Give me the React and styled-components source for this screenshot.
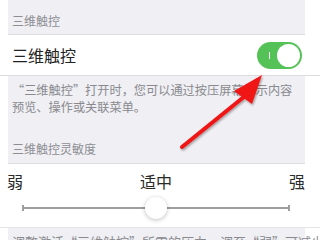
import React from 'react';
import styled, { createGlobalStyle } from 'styled-components';

const GlobalStyle = createGlobalStyle`
  html, body {
    margin: 0;
    padding: 0;
    background: #ffffff;
    overflow: hidden;
  }
  body {
    font-family: "Noto Sans CJK SC", "Noto Sans", sans-serif;
  }
`;

const Page = styled.div`
  position: relative;
  width: 320px;
  height: 240px;
  overflow: hidden;
  display: flex;
  flex-direction: column;
  & > * { flex-shrink: 0; }
`;

const GrayBlock = styled.div`
  margin: 0 15px 0 8px;
  background: #efeff4;
  height: ${(p) => p.$h}px;
  box-sizing: border-box;
  padding: ${(p) => p.$pad || '0 4px'};
  display: flex;
  flex-direction: column;
  justify-content: ${(p) => p.$justify || 'flex-start'};
  border-bottom: ${(p) => (p.$line ? '1px solid #dcdce0' : 'none')};
`;

const SectionTitle = styled.div`
  font-size: 12px;
  line-height: 16px;
  color: #8e8e93;
  padding-bottom: ${(p) => p.$pb || 0}px;
`;

const Note = styled.div`
  font-size: ${(p) => p.$size || 12.2}px;
  line-height: 17px;
  color: #8a8a8e;
  white-space: nowrap;
`;

const Row = styled.div`
  height: 40px;
  display: flex;
  align-items: center;
  justify-content: space-between;
  padding: 0 18px 0 12px;
  background: #fff;
  border-bottom: 1px solid #dcdce0;
`;

const RowLabel = styled.span`
  font-size: 16px;
  color: #222;
`;

const Toggle = styled.div`
  position: relative;
  width: 45px;
  height: 27px;
  border-radius: 14px;
  background: #55c257;
  display: flex;
  align-items: center;
  justify-content: flex-end;
  padding: 2px;
  box-sizing: border-box;
`;

const ToggleMark = styled.span`
  position: absolute;
  left: 12px;
  top: 10px;
  width: 1px;
  height: 7px;
  background: #fff;
`;

const Knob = styled.span`
  width: 23px;
  height: 23px;
  border-radius: 50%;
  background: #fff;
`;

const SliderBox = styled.div`
  height: 64px;
  background: #fff;
  display: flex;
  flex-direction: column;
  padding: 7px 0 0;
  box-sizing: border-box;
  border-bottom: 1px solid #e4e4e8;
`;

const Labels = styled.div`
  display: flex;
  justify-content: space-between;
  padding: 0 15px 0 7px;
  font-size: 16px;
  line-height: 20px;
  color: #2a2a2a;
`;

const Track = styled.div`
  position: relative;
  margin: 16px 30px 0 22px;
  height: 2px;
  background: #9e9e9e;
  &::before,
  &::after {
    content: '';
    position: absolute;
    top: -2px;
    width: 2px;
    height: 6px;
    background: #9e9e9e;
  }
  &::before { left: 0; }
  &::after { right: 0; }
`;

const Thumb = styled.span`
  position: absolute;
  left: 50%;
  top: 1px;
  width: 22px;
  height: 22px;
  margin: -11px 0 0 -11px;
  border-radius: 50%;
  background: #fff;
  box-shadow: 0 1px 4px rgba(0, 0, 0, 0.25);
`;

const Arrow = styled.svg`
  position: absolute;
  left: 0;
  top: 0;
  pointer-events: none;
`;

export default function App() {
  return (
    <Page>
      <GlobalStyle />
      <GrayBlock $h={35} $justify="flex-end" $line>
        <SectionTitle $pb={5}>三维触控</SectionTitle>
      </GrayBlock>
      <Row>
        <RowLabel>三维触控</RowLabel>
        <Toggle>
          <ToggleMark />
          <Knob />
        </Toggle>
      </Row>
      <GrayBlock $h={88} $pad="6px 4px 0" $line>
        <Note>“三维触控”打开时，您可以通过按压屏幕显示内容</Note>
        <Note>预览、操作或关联菜单。</Note>
        <SectionTitle style={{ marginTop: 'auto' }} $pb={6}>三维触控灵敏度</SectionTitle>
      </GrayBlock>
      <SliderBox>
        <Labels>
          <span>弱</span>
          <span>适中</span>
          <span>强</span>
        </Labels>
        <Track>
          <Thumb />
        </Track>
      </SliderBox>
      <GrayBlock $h={40} $pad="5px 4px 0">
        <Note $size={13}>调整激活“三维触控”所需的压力。调至“弱”可减少</Note>
      </GrayBlock>
      <Arrow width="320" height="240" viewBox="0 0 320 240">
        <defs>
          <filter id="sh" x="-20%" y="-20%" width="140%" height="140%">
            <feDropShadow dx="1" dy="1.5" stdDeviation="1.2" floodColor="#000" floodOpacity="0.35" />
          </filter>
        </defs>
        <g filter="url(#sh)">
          <line x1="182" y1="147" x2="245" y2="96" stroke="#f01414" strokeWidth="4" strokeLinecap="round" />
          <polygon points="262,75 252,104 234,91" fill="#f01414" />
        </g>
      </Arrow>
    </Page>
  );
}
